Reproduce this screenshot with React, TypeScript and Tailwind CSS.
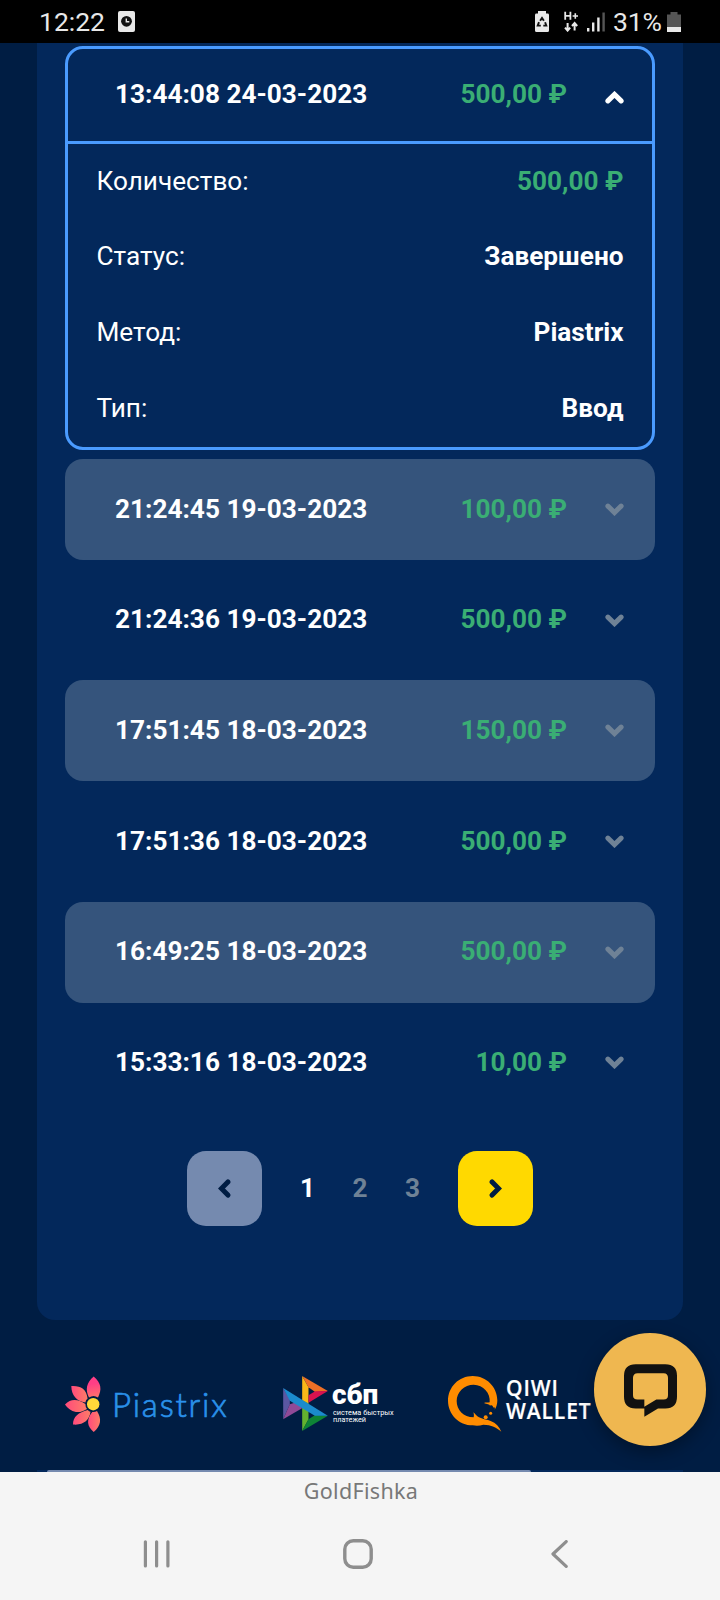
import { useState } from "react";
import clsx from "clsx";

type Payment = {
  date: string;
  amount: string;
};

const PAYMENTS: Payment[] = [
  { date: "21:24:45 19-03-2023", amount: "100,00 ₽" },
  { date: "21:24:36 19-03-2023", amount: "500,00 ₽" },
  { date: "17:51:45 18-03-2023", amount: "150,00 ₽" },
  { date: "17:51:36 18-03-2023", amount: "500,00 ₽" },
  { date: "16:49:25 18-03-2023", amount: "500,00 ₽" },
  { date: "15:33:16 18-03-2023", amount: "10,00 ₽" },
];

const DETAILS = [
  { label: "Количество:", value: "500,00 ₽", green: true },
  { label: "Статус:", value: "Завершено" },
  { label: "Метод:", value: "Piastrix" },
  { label: "Тип:", value: "Ввод" },
];

function Chevron({ className }: { className?: string }) {
  return (
    <svg viewBox="0 0 19 13" className={clsx("w-[19px] h-[13px]", className)} fill="none">
      <path d="M2.9 3.1 L9.5 9.6 L16.1 3.1" stroke="currentColor" strokeWidth="5" strokeLinecap="round" />
    </svg>
  );
}

function StatusBar() {
  return (
    <div className="h-[43px] shrink-0 bg-black text-[#e8e8e8] flex items-center pl-[39px] pr-[39px] text-[26.5px] leading-none">
      <span className="w-[79px] pt-px">12:22</span>
      <svg viewBox="0 0 17 21" className="w-[17px] h-[21px]">
        <rect width="17" height="21" rx="2" fill="#e8e8e8" />
        <circle cx="8.5" cy="10.3" r="5.4" fill="#111" />
        <path d="M8.3 7.5 V10.8 H11.3" stroke="#e8e8e8" strokeWidth="1.4" fill="none" />
      </svg>

      <div className="ml-auto flex items-center">
        {/* battery saver */}
        <svg viewBox="0 0 14 21" className="w-[14px] h-[21px]">
          <path d="M3 2.6 V0 H11 V2.6 H12.5 Q14 2.6 14 4 V19.5 Q14 21 12.5 21 H1.5 Q0 21 0 19.5 V4 Q0 2.6 1.5 2.6 Z" fill="#e8e8e8" />
          <path d="M5.1 9.8 L7 7 L8.9 9.8 M10.1 11.2 L11.3 14.6 H8.3 M5.8 14.6 H2.7 L4 11.2" stroke="#111" strokeWidth="1.9" fill="none" />
        </svg>
        {/* mobile data */}
        <svg viewBox="0 0 14 21" className="ml-[15px] w-[14px] h-[21px]" stroke="#e8e8e8" fill="none">
          <path d="M1.2 0.8 V8.8 M6.4 0.8 V8.8 M1.2 4.8 H6.4" strokeWidth="1.8" />
          <path d="M8.6 5 H14 M11.3 2.3 V7.7" strokeWidth="1.6" />
          <path d="M3.6 12 V19 M1 16.6 L3.6 19.6 L6.2 16.6 M10.6 19.5 V13 M8 15 L10.6 12 L13.2 15" strokeWidth="2" />
        </svg>
        {/* signal */}
        <svg viewBox="0 0 18 20" className="ml-[9px] w-[18px] h-5">
          <rect x="0" y="16" width="2.4" height="3.5" fill="#e8e8e8" />
          <rect x="5" y="10.5" width="2.4" height="9" fill="#e8e8e8" />
          <rect x="10.2" y="5.5" width="2.4" height="14" fill="#e8e8e8" />
          <rect x="15.4" y="0.5" width="2.4" height="19" fill="#555" />
        </svg>
        <span className="ml-2 w-[54px] pt-px tracking-[-0.2px]">31%</span>
        <svg viewBox="0 0 14 20" className="w-[14px] h-5">
          <path d="M3.5 2.5 V0 H10.5 V2.5 H14 V15 H0 V2.5 Z" fill="#555" />
          <path d="M0 15 H14 V20 H0 Z" fill="#e8e8e8" />
        </svg>
      </div>
    </div>
  );
}

function OpenPayment() {
  return (
    <div className="h-[404px] border-[3px] border-[#4a9bff] rounded-[18px]">
      <div className="h-[95px] border-b-[3px] border-[#4a9bff] flex items-center pl-[47px] pr-[28.5px] pb-[3px] font-bold">
        <span>13:44:08 24-03-2023</span>
        <span className="ml-auto text-[#3aae74]">500,00 ₽</span>
        <Chevron className="ml-[37.5px] mt-[8px] rotate-180 text-white" />
      </div>
      <div className="px-[28.5px] -mt-px">
        {DETAILS.map((d) => (
          <div key={d.label} className="h-[75.6px] flex items-center justify-between">
            <span>{d.label}</span>
            <span className={clsx("font-bold", d.green && "text-[#3aae74]")}>{d.value}</span>
          </div>
        ))}
      </div>
    </div>
  );
}

function PaymentRow({ payment, striped }: { payment: Payment; striped: boolean }) {
  return (
    <div
      className={clsx(
        "h-[101px] rounded-[18px] flex items-center pl-[50px] pr-[31.5px] font-bold",
        striped && "bg-[#35547c]"
      )}
    >
      <span className="pb-[2px]">{payment.date}</span>
      <span className="ml-auto pb-[2px] text-[#3aae74]">{payment.amount}</span>
      <Chevron className="ml-[37.5px] text-[#6f8296]" />
    </div>
  );
}

function Pagination() {
  const [page, setPage] = useState(1);

  return (
    <div className="mt-[38px] flex justify-center items-center font-bold">
      <button
        onClick={() => setPage(Math.max(1, page - 1))}
        className="w-[75px] h-[75px] rounded-[19px] bg-[#758aaf] text-[#001d43] flex items-center justify-center"
      >
        <Chevron className="rotate-90" />
      </button>
      <div className="w-[196px] flex justify-center">
        {[1, 2, 3].map((n) => (
          <button
            key={n}
            onClick={() => setPage(n)}
            className={clsx("w-[52.5px] pb-[2px]", n === page ? "text-white" : "text-[#6f8296]")}
          >
            {n}
          </button>
        ))}
      </div>
      <button
        onClick={() => setPage(Math.min(3, page + 1))}
        className="w-[75px] h-[75px] rounded-[19px] bg-[#ffd900] text-[#001d43] flex items-center justify-center"
      >
        <Chevron className="-rotate-90" />
      </button>
    </div>
  );
}

function PiastrixLogo() {
  return (
    <div className="w-[218px] flex items-center">
      <svg viewBox="0 0 38 56" className="w-[38px] h-14">
        <defs>
          <linearGradient id="petal" gradientUnits="userSpaceOnUse" x1="26" y1="8" x2="30" y2="28">
            <stop offset="0" stopColor="#ff3e86" />
            <stop offset="1" stopColor="#ff8a5c" />
          </linearGradient>
          <linearGradient id="petalLow" x1="0" y1="0" x2="1" y2="0">
            <stop offset="0" stopColor="#ff4a7d" />
            <stop offset="1" stopColor="#ff7d66" />
          </linearGradient>
        </defs>
        <path d="M28.7 0.6 C36.5 7 37 14 33 21.5 Q28.5 18.5 24 21.5 C20 14 21.5 6.5 28.7 0.6 Z" fill="url(#petal)" />
        <path d="M6.3 10 C15 9.4 21.5 12.5 22.6 22.5 Q20.6 24 20.4 26.5 C11.5 25 6.5 19.5 6.3 10 Z" fill="url(#petalLow)" />
        <path d="M0 28.6 C6 22 13 23 20.4 28 Q20.4 31.5 22 33 C14 38.5 5.5 36.5 0 28.6 Z" fill="url(#petalLow)" />
        <path d="M8 48.5 C8 40.5 13.5 36.5 22.8 34 Q24 35.5 25.5 35.8 C24.5 44.5 18 49.5 8 48.5 Z" fill="url(#petalLow)" />
        <path d="M28.7 56 C22 50.5 21 43.5 27.3 36 Q30 36.4 32 35 C37 43 36 50 28.7 56 Z" fill="url(#petalLow)" />
        <circle cx="28.2" cy="28.2" r="6.2" fill="#ffd83a" />
      </svg>
      <span className="ml-[9px] font-[Lato] font-light text-[33px] leading-none tracking-[1.8px] text-[#2a91ea] [-webkit-text-stroke:0.7px_#2a91ea]">
        Piastrix
      </span>
    </div>
  );
}

function SbpLogo() {
  return (
    <div className="w-[165px] flex items-start text-white">
      <svg viewBox="69 78 134 165" className="w-[45px] h-[55px] shrink-0">
        <path d="M69 114 L89 148 V163 L69 208 Z" fill="#5b57a2" />
        <path d="M69 208 L89 163 L108 157 L127 174 Z" fill="#904a97" />
        <path d="M126 78 L145 112 V160 L126 170 Z" fill="#fab718" />
        <path d="M126 78 L203 123 L165 126 L145 112 Z" fill="#ed6f26" />
        <path d="M203 123 L145 158 V136 L165 124 Z" fill="#d8134f" />
        <path d="M126 150 L145 160 V208 L126 243 Z" fill="#63b22f" />
        <path d="M203 197 L126 243 L145 208 L165 195 Z" fill="#0e8436" />
        <path d="M69 114 L203 197 H164 L89 152 Z" fill="#1b8bcd" />
      </svg>
      <div className="ml-[4px] pt-[5px]">
        <div className="h-[28px] text-[28px] leading-7 font-black">сбп</div>
        <div className="pl-px text-[7.3px] leading-[7.3px] whitespace-nowrap">
          система быстрых
          <br />
          платежей
        </div>
      </div>
    </div>
  );
}

function QiwiLogo() {
  return (
    <div className="flex items-center">
      <svg viewBox="54 168 162 168" className="w-[54px] h-14" fill="#ff8c00">
        <path d="M128 168 C169 168 202 201 202 241 C202 252 199 262 194 269 C196 262 193 260 189 263 C190 257 185 254 180 257 C179 252 171 253 162 249 C167 247 174 248 179 247 C182 220 160 194 131 194 C103 194 80 216 80 243 C80 270 100 292 131 292 C132 287 132 282 130 277 C136 282 140 288 147 292 C160 299 172 299 182 303 C198 309 208 320 214 335 C200 323 184 314 160 314 C149 318 138 318 128 316 C87 316 54 283 54 242 C54 201 87 168 128 168 Z" />
        <circle cx="167" cy="292" r="6" />
        <circle cx="182" cy="280" r="4.5" />
      </svg>
      <div className="ml-1 pb-[8px] font-['Open_Sans'] font-semibold text-[21px] leading-[23.5px] tracking-[0.9px] text-white [-webkit-text-stroke:0.2px_white]">
        QIWI
        <br />
        WALLET
      </div>
    </div>
  );
}

function ChatButton() {
  return (
    <button className="absolute left-[594px] top-[13px] w-28 h-[113px] rounded-full bg-[#efb750] shadow-[0_6px_18px_rgba(0,0,0,0.35)] flex justify-center pt-[31px]">
      <svg viewBox="581 133 159 158" className="w-[53px] h-[53px]">
        <path
          fillRule="evenodd"
          fill="#111"
          d="M616 133 H705 Q740 133 740 168 V231 Q740 266 705 266 H683 L642 291 V266 H616 Q581 266 581 231 V168 Q581 133 616 133 Z M622 160 Q608 160 608 174 V226 Q608 239 622 239 H642 V261 L678 239 H700 Q713 239 713 226 V174 Q713 160 700 160 Z"
        />
      </svg>
    </button>
  );
}

function BrowserBottom() {
  return (
    <div className="h-32 shrink-0 bg-[#f5f5f5] flex flex-col">
      <div className="h-[40px] pl-[2px] text-center font-['Noto_Sans'] text-[21.5px] leading-[38px] tracking-[0.3px] text-[#787878]">
        GoldFishka
      </div>
      <div className="flex-1 flex items-center justify-between pl-[143px] pr-[152px] pb-[4px]">
        <svg viewBox="0 0 28 28" className="w-7 h-7" stroke="#8e8e8e" strokeWidth="3.2" strokeLinecap="round">
          <path d="M2.4 1.8 V26 M13.6 1.8 V26 M24.9 1.8 V26" />
        </svg>
        <svg viewBox="0 0 30 30" className="w-[30px] h-[30px] mr-[7px]" fill="none">
          <rect x="1.8" y="1.8" width="26.4" height="26.4" rx="8.5" stroke="#8e8e8e" strokeWidth="3.4" />
        </svg>
        <svg viewBox="0 0 17 28" className="w-[17px] h-7" fill="none">
          <path d="M15.2 1.6 L2 14 L15.2 26.4" stroke="#8e8e8e" strokeWidth="3.2" strokeLinecap="round" strokeLinejoin="round" />
        </svg>
      </div>
    </div>
  );
}

export default function App() {
  return (
    <div className="w-[720px] h-[1600px] overflow-hidden bg-[#001d43] text-white font-[Roboto,sans-serif] flex flex-col">
      <StatusBar />

      {/* HISTORY PANEL */}
      <main className="h-[1277px] shrink-0 ml-[37px] mr-[37px] px-7 pt-[3px] rounded-b-[18px] bg-[#03285b] text-[26.2px] leading-[30px]">
        <OpenPayment />
        <div className="mt-[9px] flex flex-col gap-[9.7px]">
          {PAYMENTS.map((p, i) => (
            <PaymentRow key={p.date} payment={p} striped={i % 2 === 0} />
          ))}
        </div>
        <Pagination />
      </main>

      {/* PAYMENT METHODS */}
      <footer className="relative flex-1 flex flex-col">
        <div className="flex-1 flex items-start pl-[65px] pt-[56px]">
          <PiastrixLogo />
          <SbpLogo />
          <QiwiLogo />
        </div>
        <div className="mx-[37px] h-[2px] pl-[10px] bg-[#03285b]">
          <div className="w-[484px] h-[2px] rounded-t-[2px] bg-[#758aaf]" />
        </div>
        <ChatButton />
      </footer>

      <BrowserBottom />
    </div>
  );
}
